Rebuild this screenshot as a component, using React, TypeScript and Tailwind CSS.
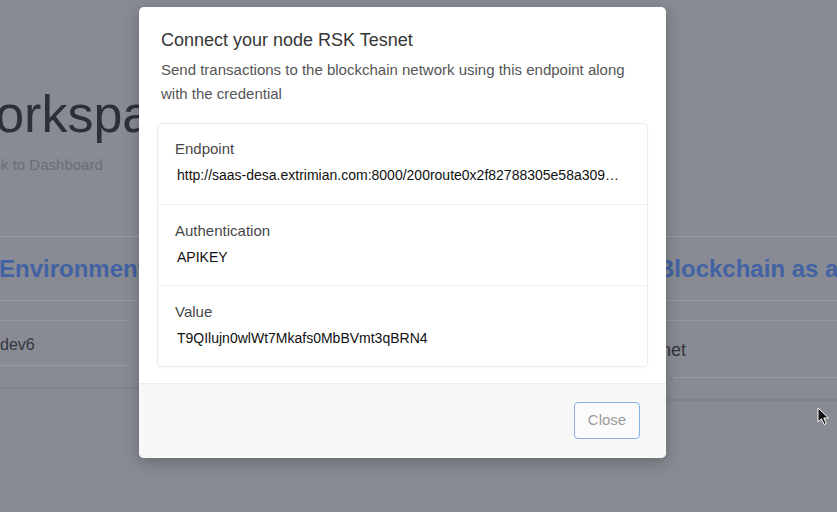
import React from 'react';

type Credential = {
  label: string;
  value: string;
};

const credentials: Credential[] = [
  {
    label: 'Endpoint',
    value: 'http://saas-desa.extrimian.com:8000/200route0x2f82788305e58a30947c1b2d9e0a6f',
  },
  { label: 'Authentication', value: 'APIKEY' },
  { label: 'Value', value: 'T9QIlujn0wlWt7Mkafs0MbBVmt3qBRN4' },
];

const Cursor = () => (
  <svg width="14" height="20" viewBox="0 0 14 20" className="absolute left-[817px] top-[407px]">
    <path d="M1 1 L1 15 L4.5 11.8 L7 17.5 L9.2 16.5 L6.8 11 L11.5 11 Z" fill="#111" stroke="#fff" strokeWidth="1" />
  </svg>
);

const App: React.FC = () => {
  return (
    <div className="relative h-[512px] w-[837px] overflow-hidden bg-[#888b93] font-['Liberation_Sans',Arial,sans-serif]">
      {/* page behind the backdrop */}
      <div className="ml-[-44px] pt-[88px]">
        <h1 className="ml-[-9px] text-[52px] leading-[52px] text-[#2c303a] whitespace-nowrap">Workspace</h1>
        <div className="mt-[15px] text-[15px] leading-[20px] text-[#6a6e78] whitespace-nowrap">← Back to Dashboard</div>

        <div className="mt-[61px] flex items-start">
          {/* left card */}
          <div className="w-[183px] shrink-0 border-t border-[#9a9da4] border-b-2 border-b-[#80838b]">
            <div className="flex h-[64px] items-center border-b border-[#979aa1] pl-[43px] text-[24px] font-bold text-[#4262a4] whitespace-nowrap">
              Environment
            </div>
            <div className="mr-[9px]">
              <div className="h-[20px] border-b border-[#979aa1]" />
              <div className="flex h-[45px] items-center border-b border-[#979aa1] pl-[44px] pt-[3px] text-[16px] text-[#33363d]">
                dev6
              </div>
              <div className="h-[21px]" />
            </div>
          </div>

          {/* middle card (behind modal) */}
          <div className="ml-[16px] w-[447px] shrink-0 border-t border-[#9a9da4] border-b-2 border-b-[#80838b]">
            <div className="flex h-[64px] items-center border-b border-[#979aa1] pl-[20px] text-[24px] font-bold text-[#4262a4]">
              Network
            </div>
            <div className="h-[20px] border-b border-[#979aa1]" />
            <div className="flex h-[45px] items-center border-b border-[#979aa1] pl-[20px] text-[16px] text-[#33363d]">
              RSK
            </div>
            <div className="h-[21px]" />
          </div>

          {/* right card */}
          <div className="ml-[16px] w-[260px] shrink-0 border-t border-[#9a9da4] border-b-2 border-b-[#80838b]">
            <div className="flex h-[64px] items-center border-b border-[#979aa1] pl-[39px] text-[24px] font-bold text-[#4262a4] whitespace-nowrap">
              Blockchain as a Service
            </div>
            <div className="h-[20px] border-b border-[#979aa1]" />
            <div className="ml-[55px] flex h-[57px] items-center border-b border-[#979aa1] pt-[3px] text-[18px] text-[#33363d]">
              <span className="ml-[-40px]">Tesnet</span>
            </div>
            <div className="h-[21px]" />
          </div>
        </div>
      </div>

      {/* modal */}
      <div className="absolute left-[139px] top-[7px] flex h-[451px] w-[527px] flex-col overflow-hidden rounded-[5px] bg-white shadow-[0_4px_16px_rgba(0,0,0,0.25)]">
        <div className="px-[22px] pt-[20px]">
          <h2 className="text-[18px] leading-[27px] text-[#363636]">Connect your node RSK Tesnet</h2>
          <p className="mt-[4px] text-[15px] leading-[24px] text-[#555]">
            Send transactions to the blockchain network using this endpoint along with the credential
          </p>
        </div>

        <div className="px-[18px] pt-[17px] pb-[16px]">
          <div className="rounded-[4px] border border-[#ececec] shadow-[0_1px_2px_rgba(0,0,0,0.04)]">
            {credentials.map((c, i) => (
              <div
                key={c.label}
                className={`px-[17px] ${i > 0 ? 'h-[81px] border-t border-[#f0f0f0] pt-[16px]' : 'h-[80px] pt-[15px]'}`}
              >
                <div className="text-[15px] leading-[20px] text-[#474747]">{c.label}</div>
                <div className="mt-[7px] truncate pl-[2px] pr-[8px] text-[14px] leading-[18px] text-[#111]">{c.value}</div>
              </div>
            ))}
          </div>
        </div>

        <div className="flex flex-1 items-start justify-end border-t border-[#ededed] bg-[#f8f8f9] pr-[26px] pt-[18px]">
          <button className="h-[37px] w-[66px] rounded-[4px] border border-[#8aafe6] bg-white/40 text-[15px] text-[#9c9c9c]">
            Close
          </button>
        </div>
      </div>

      <Cursor />
    </div>
  );
};

export default App;
